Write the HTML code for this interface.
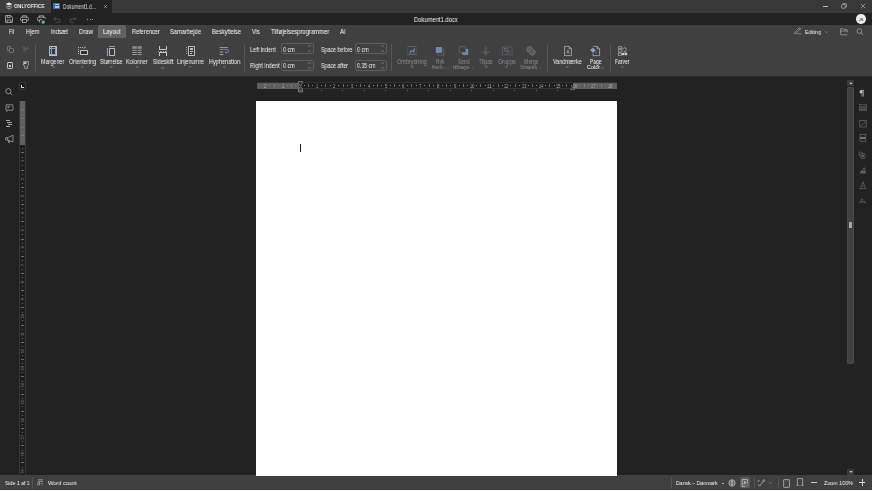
<!DOCTYPE html><html><head><meta charset="utf-8"><style>
html,body{margin:0;padding:0;width:872px;height:491px;overflow:hidden;background:#222;}
body{position:relative;font-family:"Liberation Sans", sans-serif;}
.t{position:absolute;white-space:nowrap;will-change:transform;}
.r{position:absolute;display:block;overflow:visible;}
</style></head><body>
<div class="r" style="left:0px;top:0px;width:872px;height:12.5px;background:#383838;"></div>
<div class="r" style="left:0px;top:0px;width:51px;height:12.5px;background:#3e3e3e;"></div>
<div class="r" style="left:51px;top:0px;width:61px;height:12.5px;background:#222;"></div>
<div class="r" style="left:0px;top:12.5px;width:872px;height:12.5px;background:#222;"></div>
<div class="r" style="left:0px;top:25px;width:872px;height:51px;background:#404040;"></div>
<div class="r" style="left:0px;top:76px;width:872px;height:399px;background:#222;"></div>
<div class="r" style="left:0px;top:76px;width:872px;height:1px;background:#2b2b2b;"></div>
<div class="r" style="left:0px;top:475.3px;width:872px;height:14.3px;background:#404040;"></div>
<div class="r" style="left:0px;top:489.5px;width:872px;height:1.5px;background:#f2f2f2;"></div>
<svg class="r" style="left:5.10px;top:2.30px;" width="8" height="8" viewBox="0 0 80 80" fill="none" stroke="#d0d0d0" stroke-width="10"><path d="M40 4 L74 20 L40 36 L6 20 Z" fill="#ececec" stroke="none"/>
<path d="M14 34 L6 38 L40 54 L74 38 L66 34 L40 46 Z" fill="#c4c4c4" stroke="none"/>
<path d="M14 52 L6 56 L40 74 L74 56 L66 52 L40 64 Z" fill="#a8a8a8" stroke="none"/></svg>
<div class="t" style="left:14.00px;top:3.00px;font-size:5.600px;line-height:6.26px;color:#e6e6e6;font-weight:bold;transform:scaleX(0.8630);transform-origin:0 0;">ONLYOFFICE</div>
<div class="r" style="left:53.4px;top:2.7px;width:6.8px;height:6.8px;background:#3e6aa8;border-radius:0.5px;"></div>
<div class="r" style="left:55.0px;top:4.3px;width:3.6px;height:0.6px;background:#b4c6e2;"></div>
<div class="r" style="left:55.0px;top:5.8px;width:3.6px;height:0.6px;background:#b4c6e2;"></div>
<div class="r" style="left:55.0px;top:7.3px;width:3.6px;height:0.6px;background:#b4c6e2;"></div>
<div class="t" style="left:63.00px;top:3.00px;font-size:6.500px;line-height:7.26px;color:#d8d8d8;transform:scaleX(0.7487);transform-origin:0 0;">Dokument1.d...</div>
<svg class="r" style="left:103.30px;top:3.70px;" width="5" height="5" viewBox="0 0 50 50" fill="none" stroke="#cfcfcf" stroke-width="10"><path d="M8 8 L42 42 M42 8 L8 42" stroke-width="5"/></svg>
<div class="r" style="left:823.2px;top:6.0px;width:5.2px;height:0.8px;background:#b8b8b8;"></div>
<svg class="r" style="left:841.20px;top:2.60px;" width="6" height="6" viewBox="0 0 60 60" fill="none" stroke="#cfcfcf" stroke-width="10"><rect x="6" y="16" width="36" height="36" rx="5" stroke-width="6"/><path d="M16 10 Q16 6 22 6 H48 Q54 6 54 12 V38 Q54 44 48 44" stroke-width="6"/></svg>
<svg class="r" style="left:859.60px;top:2.60px;" width="6" height="6" viewBox="0 0 60 60" fill="none" stroke="#d0d0d0" stroke-width="10"><path d="M8 8 L52 52 M52 8 L8 52" stroke-width="5.5"/></svg>
<svg class="r" style="left:4.50px;top:15.45px;" width="8" height="8" viewBox="0 0 80 80" fill="none" stroke="#d2d2d2" stroke-width="10"><path d="M6 6 H58 L74 22 V74 H6 Z" stroke-width="7"/><path d="M24 6 V26 H52 V6" stroke-width="6.5"/><path d="M22 74 V50 H58 V74" stroke-width="6.5"/></svg>
<svg class="r" style="left:20.20px;top:15.45px;" width="9" height="8" viewBox="0 0 90 80" fill="none" stroke="#d2d2d2" stroke-width="10"><path d="M24 22 V8 H66 V22" stroke-width="6.5"/><path d="M22 56 H14 Q6 56 6 48 V34 Q6 22 18 22 H72 Q84 22 84 34 V48 Q84 56 76 56 H68" stroke-width="6.5"/><rect x="26" y="46" width="38" height="28" stroke-width="6.5"/></svg>
<svg class="r" style="left:36.50px;top:15.45px;" width="9" height="8" viewBox="0 0 90 80" fill="none" stroke="#d2d2d2" stroke-width="10"><path d="M24 22 V8 H66 V22" stroke-width="6.5"/><path d="M22 56 H14 Q6 56 6 48 V34 Q6 22 18 22 H72 Q84 22 84 34 V40" stroke-width="6.5"/><path d="M26 74 V46 H50" stroke-width="6.5"/></svg>
<svg class="r" style="left:41.10px;top:19.60px;" width="4.4" height="4.4" viewBox="0 0 44.0 44.0" fill="none" stroke="#d0d0d0" stroke-width="10"><path d="M22 2 L38 10 L38 26 Q38 38 22 42 Q6 38 6 26 L6 10 Z" fill="#4fa36a" stroke="none"/><path d="M12 22 L19 29 L32 15" stroke="#dff5e6" stroke-width="4"/></svg>
<svg class="r" style="left:53.30px;top:15.50px;" width="8" height="8" viewBox="0 0 80 80" fill="none" stroke="#6a6a6a" stroke-width="10"><path d="M14 30 H52 Q70 30 70 48 Q70 66 52 66 H30 M28 14 L12 30 L28 46" stroke-width="6"/></svg>
<svg class="r" style="left:69.40px;top:15.50px;" width="8" height="8" viewBox="0 0 80 80" fill="none" stroke="#6a6a6a" stroke-width="10"><path d="M66 30 H28 Q10 30 10 48 Q10 66 28 66 H50 M52 14 L68 30 L52 46" stroke-width="6"/></svg>
<div class="r" style="left:87.3px;top:19.0px;width:1.0px;height:1.0px;background:#9c9c9c;"></div>
<div class="r" style="left:89.5px;top:19.0px;width:1.0px;height:1.0px;background:#9c9c9c;"></div>
<div class="r" style="left:91.7px;top:19.0px;width:1.0px;height:1.0px;background:#9c9c9c;"></div>
<div class="t" style="left:414.00px;top:16.00px;font-size:6.500px;line-height:7.26px;color:#f0f0f0;transform:scaleX(0.8980);transform-origin:0 0;">Dokument1.docx</div>
<div class="r" style="left:856.4px;top:14.4px;width:9.4px;height:9.4px;border-radius:50%;background:#ececec;"></div>
<div class="t" style="left:858.93px;top:19.00px;font-size:3.400px;line-height:3.80px;color:#6a6a6a;font-weight:bold;">JB</div>
<div class="r" style="left:98px;top:25.4px;width:28px;height:12.5px;background:#616161;border-radius:2px 2px 0 0;"></div>
<div class="t" style="left:8.70px;top:28.00px;font-size:6.500px;line-height:7.26px;color:#fafafa;transform:scaleX(0.6853);transform-origin:0 0;">Fil</div>
<div class="t" style="left:25.80px;top:28.00px;font-size:6.500px;line-height:7.26px;color:#fafafa;transform:scaleX(0.8835);transform-origin:0 0;">Hjem</div>
<div class="t" style="left:50.60px;top:28.00px;font-size:6.500px;line-height:7.26px;color:#fafafa;transform:scaleX(0.8606);transform-origin:0 0;">Indsæt</div>
<div class="t" style="left:79.00px;top:28.00px;font-size:6.500px;line-height:7.26px;color:#fafafa;transform:scaleX(0.9164);transform-origin:0 0;">Draw</div>
<div class="t" style="left:103.00px;top:28.00px;font-size:6.500px;line-height:7.26px;color:#fafafa;transform:scaleX(0.9019);transform-origin:0 0;">Layout</div>
<div class="t" style="left:131.70px;top:28.00px;font-size:6.500px;line-height:7.26px;color:#fafafa;transform:scaleX(0.8678);transform-origin:0 0;">Referencer</div>
<div class="t" style="left:170.30px;top:28.00px;font-size:6.500px;line-height:7.26px;color:#fafafa;transform:scaleX(0.8845);transform-origin:0 0;">Samarbejde</div>
<div class="t" style="left:212.10px;top:28.00px;font-size:6.500px;line-height:7.26px;color:#fafafa;transform:scaleX(0.8726);transform-origin:0 0;">Beskyttelse</div>
<div class="t" style="left:251.70px;top:28.00px;font-size:6.500px;line-height:7.26px;color:#fafafa;transform:scaleX(0.8528);transform-origin:0 0;">Vis</div>
<div class="t" style="left:270.60px;top:28.00px;font-size:6.500px;line-height:7.26px;color:#fafafa;transform:scaleX(0.9021);transform-origin:0 0;">Tilføjelsesprogrammer</div>
<div class="t" style="left:339.50px;top:28.00px;font-size:6.500px;line-height:7.26px;color:#fafafa;transform:scaleX(0.8955);transform-origin:0 0;">AI</div>
<svg class="r" style="left:793.60px;top:27.40px;" width="8" height="8" viewBox="0 0 80 80" fill="none" stroke="#c8c8c8" stroke-width="10"><path d="M6 68 L10 52 L50 10 Q56 4 62 10 Q68 16 62 22 L22 62 Z M44 16 L56 28 M30 68 H72" stroke-width="5"/></svg>
<div class="t" style="left:804.70px;top:29.00px;font-size:6.200px;line-height:6.93px;color:#ececec;transform:scaleX(0.8440);transform-origin:0 0;">Editing</div>
<svg class="r" style="left:825.10px;top:30.90px;" width="3" height="2" viewBox="0 0 30 20" fill="none" stroke="#b8b8b8" stroke-width="10"><path d="M3 4 L15 16 L27 4" stroke-width="5"/></svg>
<svg class="r" style="left:839.70px;top:27.60px;" width="8" height="8" viewBox="0 0 80 80" fill="none" stroke="#c8c8c8" stroke-width="10"><path d="M54 68 H12 Q6 68 6 62 V10 Q6 6 10 6 H26 L34 14 H66 Q72 14 72 20 V44 M6 30 H72" stroke-width="5.5"/><path d="M48 68 H72 M64 60 L72 68 L64 76" stroke="#79a3de" stroke-width="5"/></svg>
<svg class="r" style="left:856.20px;top:27.60px;" width="8" height="8" viewBox="0 0 80 80" fill="none" stroke="#c8c8c8" stroke-width="10"><circle cx="34" cy="30" r="24" stroke-width="5.5"/><path d="M52 48 L70 68" stroke-width="5.5"/></svg>
<div class="r" style="left:6.6px;top:46.3px;width:4.6px;height:4.4px;background:transparent;box-sizing:border-box;border:0.8px solid #707070;border-radius:1px;"></div>
<div class="r" style="left:9.0px;top:48.0px;width:4.6px;height:4.8px;background:#404040;box-sizing:border-box;border:0.8px solid #707070;border-radius:1px;"></div>
<svg class="r" style="left:22.00px;top:45.45px;" width="8" height="8" viewBox="0 0 80 80" fill="none" stroke="#6e6e6e" stroke-width="10"><circle cx="16" cy="26" r="9" stroke-width="5"/><circle cx="24" cy="56" r="9" stroke-width="5"/><path d="M24 30 L40 40 L64 10 M30 50 L40 40 L72 34" stroke-width="5"/></svg>
<div class="r" style="left:7.0px;top:62.3px;width:6.2px;height:7.0px;background:transparent;box-sizing:border-box;border:1px solid #c4c4c4;border-radius:1.2px;"></div>
<div class="r" style="left:8.4px;top:61.8px;width:3.4px;height:1.0px;background:#c4c4c4;"></div>
<div class="r" style="left:9.2px;top:65.0px;width:1.8px;height:1.6px;background:#c4c4c4;"></div>
<svg class="r" style="left:21.65px;top:61.40px;" width="8" height="8" viewBox="0 0 80 80" fill="none" stroke="#c9c9c9" stroke-width="10"><path d="M14 6 H64 V40 L54 48 V74 H28 V48 L14 40 Z" stroke-width="6.5"/><path d="M20 12 H46 V26 L34 30 H20 Z" fill="#c9c9c9" stroke="none"/></svg>
<div class="r" style="left:35.0px;top:43.8px;width:0.6px;height:27px;background:#555555;"></div>
<div class="r" style="left:48.9px;top:46.0px;width:8.2px;height:10.0px;background:#383838;box-sizing:border-box;border:1px solid #bdbdbd;border-radius:0.6px;"></div>
<div class="r" style="left:50.7px;top:47.0px;width:0.8px;height:8.0px;background:#84a5d8;"></div>
<div class="r" style="left:54.6px;top:47.0px;width:0.8px;height:8.0px;background:#84a5d8;"></div>
<div class="r" style="left:50.0px;top:47.5px;width:6.0px;height:0.8px;background:#84a5d8;"></div>
<div class="r" style="left:50.0px;top:53.6px;width:6.0px;height:0.8px;background:#84a5d8;"></div>
<div class="t" style="left:41.20px;top:58.00px;font-size:6.500px;line-height:7.26px;color:#f0f0f0;transform:scaleX(0.8341);transform-origin:0 0;">Margener</div>
<svg class="r" style="left:51.50px;top:66.30px;" width="2.6" height="1.8" viewBox="0 0 26.0 18.0" fill="none" stroke="#b4b4b4" stroke-width="10"><path d="M3 4 L13 14 L23 4" stroke-width="6.5"/></svg>
<div class="r" style="left:77.9px;top:47.1px;width:1.0px;height:1.0px;background:#b8b8b8;"></div>
<div class="r" style="left:77.9px;top:48.9px;width:1.0px;height:1.0px;background:#b8b8b8;"></div>
<div class="r" style="left:77.9px;top:50.9px;width:1.0px;height:1.0px;background:#b8b8b8;"></div>
<div class="r" style="left:77.9px;top:53.0px;width:1.0px;height:1.0px;background:#b8b8b8;"></div>
<div class="r" style="left:79.9px;top:47.1px;width:1.0px;height:1.0px;background:#b8b8b8;"></div>
<div class="r" style="left:81.9px;top:47.1px;width:1.0px;height:1.0px;background:#b8b8b8;"></div>
<div class="r" style="left:80.0px;top:49.9px;width:7.6px;height:5.0px;background:#343434;box-sizing:border-box;border:1px solid #c4c4c4;border-radius:0.5px;"></div>
<svg class="r" style="left:83.40px;top:46.00px;" width="4" height="4" viewBox="0 0 40 40" fill="none" stroke="#d0d0d0" stroke-width="10"><path d="M6 30 Q6 8 24 10" stroke="#84a5d8" stroke-width="7"/><path d="M18 2 L32 12 L18 22 Z" fill="#84a5d8" stroke="none"/></svg>
<div class="t" style="left:68.90px;top:58.00px;font-size:6.500px;line-height:7.26px;color:#f0f0f0;transform:scaleX(0.8398);transform-origin:0 0;">Orientering</div>
<svg class="r" style="left:81.10px;top:66.30px;" width="2.6" height="1.8" viewBox="0 0 26.0 18.0" fill="none" stroke="#b4b4b4" stroke-width="10"><path d="M3 4 L13 14 L23 4" stroke-width="6.5"/></svg>
<div class="r" style="left:109.0px;top:48.0px;width:6.0px;height:8.0px;background:#383838;box-sizing:border-box;border:1px solid #bdbdbd;border-radius:0.6px;"></div>
<div class="r" style="left:108.9px;top:46.2px;width:6.1px;height:0.9px;background:#84a5d8;"></div>
<div class="r" style="left:107.0px;top:48.0px;width:0.9px;height:8.0px;background:#84a5d8;"></div>
<div class="t" style="left:99.95px;top:58.00px;font-size:6.500px;line-height:7.26px;color:#f0f0f0;transform:scaleX(0.8534);transform-origin:0 0;">Størrelse</div>
<svg class="r" style="left:109.90px;top:66.30px;" width="2.6" height="1.8" viewBox="0 0 26.0 18.0" fill="none" stroke="#b4b4b4" stroke-width="10"><path d="M3 4 L13 14 L23 4" stroke-width="6.5"/></svg>
<svg class="r" style="left:132.20px;top:45.90px;" width="10" height="10" viewBox="0 0 100 100" fill="none" stroke="#c4c4c4" stroke-width="10"><rect x="3" y="2" width="45" height="26" fill="#8a8a8a" stroke="none"/><rect x="56" y="2" width="41" height="26" fill="#8a8a8a" stroke="none"/><path d="M3 43 H48 M56 43 H97 M3 65 H48 M56 65 H97 M3 85 H48 M56 85 H97" stroke-width="7"/></svg>
<div class="t" style="left:126.40px;top:58.00px;font-size:6.500px;line-height:7.26px;color:#f0f0f0;transform:scaleX(0.8302);transform-origin:0 0;">Kolonner</div>
<svg class="r" style="left:135.90px;top:66.30px;" width="2.6" height="1.8" viewBox="0 0 26.0 18.0" fill="none" stroke="#b4b4b4" stroke-width="10"><path d="M3 4 L13 14 L23 4" stroke-width="6.5"/></svg>
<div class="r" style="left:159.0px;top:46.0px;width:0.9px;height:4.0px;background:#c4c4c4;"></div>
<div class="r" style="left:166.0px;top:46.0px;width:0.9px;height:4.0px;background:#c4c4c4;"></div>
<div class="r" style="left:159.0px;top:49.2px;width:7.9px;height:0.9px;background:#c4c4c4;"></div>
<div class="r" style="left:159.0px;top:52.2px;width:7.9px;height:0.9px;background:#c4c4c4;"></div>
<div class="r" style="left:159.0px;top:52.2px;width:0.9px;height:3.8px;background:#c4c4c4;"></div>
<div class="r" style="left:166.0px;top:52.2px;width:0.9px;height:3.8px;background:#c4c4c4;"></div>
<div class="r" style="left:157.9px;top:50.9px;width:1.0px;height:0.8px;background:#84a5d8;"></div>
<div class="r" style="left:159.6px;top:50.9px;width:1.0px;height:0.8px;background:#84a5d8;"></div>
<div class="r" style="left:161.3px;top:50.9px;width:1.0px;height:0.8px;background:#84a5d8;"></div>
<div class="r" style="left:163.0px;top:50.9px;width:1.0px;height:0.8px;background:#84a5d8;"></div>
<div class="r" style="left:164.7px;top:50.9px;width:1.0px;height:0.8px;background:#84a5d8;"></div>
<div class="r" style="left:166.4px;top:50.9px;width:1.0px;height:0.8px;background:#84a5d8;"></div>
<div class="t" style="left:152.50px;top:58.00px;font-size:6.500px;line-height:7.26px;color:#f0f0f0;transform:scaleX(0.8305);transform-origin:0 0;">Sideskift</div>
<svg class="r" style="left:160.80px;top:66.50px;" width="3.2" height="2.2" viewBox="0 0 32.0 22.0" fill="none" stroke="#c0c0c0" stroke-width="10"><path d="M3 4 L16 17 L29 4" stroke-width="6"/></svg>
<div class="r" style="left:188.2px;top:46.2px;width:6.6px;height:9.6px;background:#383838;box-sizing:border-box;border:1px solid #bdbdbd;border-radius:0.8px;"></div>
<div class="r" style="left:189.9px;top:47.6px;width:3.2px;height:0.8px;background:#bdbdbd;"></div>
<div class="r" style="left:189.9px;top:48.9px;width:3.2px;height:1.6px;background:#bdbdbd;"></div>
<div class="r" style="left:189.9px;top:51.3px;width:3.2px;height:0.8px;background:#bdbdbd;"></div>
<div class="r" style="left:189.9px;top:52.9px;width:2.0px;height:0.8px;background:#bdbdbd;"></div>
<div class="r" style="left:185.8px;top:46.6px;width:0.9px;height:1.2px;background:#84a5d8;"></div>
<div class="r" style="left:185.8px;top:48.7px;width:0.9px;height:1.2px;background:#84a5d8;"></div>
<div class="r" style="left:185.8px;top:50.9px;width:0.9px;height:1.2px;background:#84a5d8;"></div>
<div class="r" style="left:185.8px;top:53.2px;width:0.9px;height:1.2px;background:#84a5d8;"></div>
<div class="t" style="left:177.15px;top:58.00px;font-size:6.500px;line-height:7.26px;color:#f0f0f0;transform:scaleX(0.8366);transform-origin:0 0;">Linjenumre</div>
<svg class="r" style="left:189.30px;top:66.30px;" width="2.6" height="1.8" viewBox="0 0 26.0 18.0" fill="none" stroke="#b4b4b4" stroke-width="10"><path d="M3 4 L13 14 L23 4" stroke-width="6.5"/></svg>
<svg class="r" style="left:219.10px;top:45.90px;" width="10" height="10" viewBox="0 0 100 100" fill="none" stroke="#c9c9c9" stroke-width="10"><path d="M7 16 H89 M7 61 H40 M7 86 H44" stroke-width="7"/><path d="M7 36 H80 Q98 36 98 50 Q98 64 82 64 H72" stroke="#84a5d8" stroke-width="6"/><path d="M74 52 L60 64 L74 76 Z" fill="#84a5d8" stroke="none"/></svg>
<div class="t" style="left:208.55px;top:58.00px;font-size:6.500px;line-height:7.26px;color:#f0f0f0;transform:scaleX(0.8521);transform-origin:0 0;">Hyphenation</div>
<svg class="r" style="left:222.80px;top:66.30px;" width="2.6" height="1.8" viewBox="0 0 26.0 18.0" fill="none" stroke="#b4b4b4" stroke-width="10"><path d="M3 4 L13 14 L23 4" stroke-width="6.5"/></svg>
<div class="r" style="left:244.3px;top:43.8px;width:0.6px;height:27px;background:#555555;"></div>
<div class="t" style="left:249.60px;top:46.00px;font-size:6.500px;line-height:7.26px;color:#f0f0f0;transform:scaleX(0.8499);transform-origin:0 0;">Left indent</div>
<div class="t" style="left:249.60px;top:62.00px;font-size:6.500px;line-height:7.26px;color:#f0f0f0;transform:scaleX(0.8504);transform-origin:0 0;">Right indent</div>
<div class="r" style="left:281.2px;top:43.4px;width:32.4px;height:10.8px;box-sizing:border-box;border:0.7px solid #5c5c5c;border-radius:2px;background:#404040;"></div>
<div class="t" style="left:283.30px;top:46.00px;font-size:6.500px;line-height:7.26px;color:#f0f0f0;transform:scaleX(0.8236);transform-origin:0 0;">0 cm</div>
<svg class="r" style="left:307.90px;top:45.40px;" width="3" height="2" viewBox="0 0 30 20" fill="none" stroke="#bbbbbb" stroke-width="10"><path d="M4 16 L15 4 L26 16" stroke-width="5"/></svg>
<svg class="r" style="left:307.90px;top:50.40px;" width="3" height="2" viewBox="0 0 30 20" fill="none" stroke="#bbbbbb" stroke-width="10"><path d="M4 4 L15 16 L26 4" stroke-width="5"/></svg>
<div class="r" style="left:281.2px;top:60.2px;width:32.4px;height:10.8px;box-sizing:border-box;border:0.7px solid #5c5c5c;border-radius:2px;background:#404040;"></div>
<div class="t" style="left:283.30px;top:62.00px;font-size:6.500px;line-height:7.26px;color:#f0f0f0;transform:scaleX(0.8236);transform-origin:0 0;">0 cm</div>
<svg class="r" style="left:307.90px;top:62.20px;" width="3" height="2" viewBox="0 0 30 20" fill="none" stroke="#bbbbbb" stroke-width="10"><path d="M4 16 L15 4 L26 16" stroke-width="5"/></svg>
<svg class="r" style="left:307.90px;top:67.20px;" width="3" height="2" viewBox="0 0 30 20" fill="none" stroke="#bbbbbb" stroke-width="10"><path d="M4 4 L15 16 L26 4" stroke-width="5"/></svg>
<div class="t" style="left:320.80px;top:46.00px;font-size:6.500px;line-height:7.26px;color:#f0f0f0;transform:scaleX(0.8121);transform-origin:0 0;">Space before</div>
<div class="t" style="left:320.80px;top:62.00px;font-size:6.500px;line-height:7.26px;color:#f0f0f0;transform:scaleX(0.8123);transform-origin:0 0;">Space after</div>
<div class="r" style="left:355.2px;top:43.4px;width:31.5px;height:10.8px;box-sizing:border-box;border:0.7px solid #5c5c5c;border-radius:2px;background:#404040;"></div>
<div class="t" style="left:357.30px;top:46.00px;font-size:6.500px;line-height:7.26px;color:#f0f0f0;transform:scaleX(0.8236);transform-origin:0 0;">0 cm</div>
<svg class="r" style="left:381.00px;top:45.40px;" width="3" height="2" viewBox="0 0 30 20" fill="none" stroke="#bbbbbb" stroke-width="10"><path d="M4 16 L15 4 L26 16" stroke-width="5"/></svg>
<svg class="r" style="left:381.00px;top:50.40px;" width="3" height="2" viewBox="0 0 30 20" fill="none" stroke="#bbbbbb" stroke-width="10"><path d="M4 4 L15 16 L26 4" stroke-width="5"/></svg>
<div class="r" style="left:355.2px;top:60.2px;width:31.5px;height:10.8px;box-sizing:border-box;border:0.7px solid #5c5c5c;border-radius:2px;background:#404040;"></div>
<div class="t" style="left:357.30px;top:62.00px;font-size:6.500px;line-height:7.26px;color:#f0f0f0;transform:scaleX(0.7915);transform-origin:0 0;">0.35 cm</div>
<svg class="r" style="left:381.00px;top:62.20px;" width="3" height="2" viewBox="0 0 30 20" fill="none" stroke="#bbbbbb" stroke-width="10"><path d="M4 16 L15 4 L26 16" stroke-width="5"/></svg>
<svg class="r" style="left:381.00px;top:67.20px;" width="3" height="2" viewBox="0 0 30 20" fill="none" stroke="#bbbbbb" stroke-width="10"><path d="M4 4 L15 16 L26 4" stroke-width="5"/></svg>
<div class="r" style="left:391.3px;top:43.8px;width:0.6px;height:27px;background:#555555;"></div>
<svg class="r" style="left:406.90px;top:45.90px;" width="10" height="10" viewBox="0 0 100 100" fill="none" stroke="#767676" stroke-width="10"><path d="M3 5 H97 M3 85 H97" stroke-width="6"/><path d="M6 22 V28 M6 42 V48 M6 64 V70 M94 22 V28 M94 42 V48 M94 64 V70" stroke-width="6"/><path d="M26 76 L30 48 Q34 40 44 44 L58 46 L70 26 L78 24 L84 36 L76 40 L74 76 L66 76 L64 58 L42 58 L38 76 Z" fill="#6c83a8" stroke="none"/></svg>
<div class="t" style="left:397.00px;top:58.00px;font-size:6.500px;line-height:7.26px;color:#8c8c8c;transform:scaleX(0.8418);transform-origin:0 0;">Ombrydning</div>
<svg class="r" style="left:410.60px;top:66.30px;" width="2.6" height="1.8" viewBox="0 0 26.0 18.0" fill="none" stroke="#b4b4b4" stroke-width="10"><path d="M3 4 L13 14 L23 4" stroke-width="6.5"/></svg>
<svg class="r" style="left:435.20px;top:45.90px;" width="10" height="10" viewBox="0 0 100 100" fill="none" stroke="#767676" stroke-width="10"><path d="M69 31 H88 V91 H28 V69" stroke-width="6"/><rect x="8" y="11" width="61" height="58" fill="#7389b0" stroke="none"/></svg>
<div class="t" style="left:436.10px;top:58.00px;font-size:6.500px;line-height:7.26px;color:#8c8c8c;transform:scaleX(0.7504);transform-origin:0 0;">Ryk</div>
<div class="t" style="left:432.30px;top:64.00px;font-size:6.200px;line-height:6.93px;color:#909090;transform:scaleX(0.8872);transform-origin:0 0;">frem</div>
<svg class="r" style="left:444.10px;top:66.60px;" width="3" height="2" viewBox="0 0 30 20" fill="none" stroke="#777" stroke-width="10"><path d="M4 4 L15 16 L26 4" stroke-width="5"/></svg>
<svg class="r" style="left:458.00px;top:45.90px;" width="10" height="10" viewBox="0 0 100 100" fill="none" stroke="#767676" stroke-width="10"><rect x="42" y="30" width="60" height="59" fill="#7389b0" stroke="none"/><rect x="11" y="7" width="66" height="57" rx="8" fill="#404040" stroke-width="6"/></svg>
<div class="t" style="left:458.00px;top:58.00px;font-size:6.500px;line-height:7.26px;color:#8c8c8c;transform:scaleX(0.7642);transform-origin:0 0;">Send</div>
<div class="t" style="left:453.00px;top:64.00px;font-size:6.200px;line-height:6.93px;color:#909090;transform:scaleX(0.9087);transform-origin:0 0;">tilbage</div>
<svg class="r" style="left:470.60px;top:66.60px;" width="3" height="2" viewBox="0 0 30 20" fill="none" stroke="#777" stroke-width="10"><path d="M4 4 L15 16 L26 4" stroke-width="5"/></svg>
<svg class="r" style="left:481.20px;top:45.90px;" width="10" height="10" viewBox="0 0 100 100" fill="none" stroke="#767676" stroke-width="10"><path d="M48 16 L60 32 L48 46 L36 32 Z M8 60 H88 M48 46 V96 M30 74 H66" stroke-width="6"/><path d="M48 4 V14" stroke-width="5"/></svg>
<div class="t" style="left:479.40px;top:58.00px;font-size:6.500px;line-height:7.26px;color:#8c8c8c;transform:scaleX(0.7955);transform-origin:0 0;">Tilpas</div>
<svg class="r" style="left:484.90px;top:66.30px;" width="2.6" height="1.8" viewBox="0 0 26.0 18.0" fill="none" stroke="#b4b4b4" stroke-width="10"><path d="M3 4 L13 14 L23 4" stroke-width="6.5"/></svg>
<svg class="r" style="left:501.50px;top:45.90px;" width="10" height="10" viewBox="0 0 100 100" fill="none" stroke="#767676" stroke-width="10"><rect x="6" y="10" width="94" height="79" stroke="#56698a" stroke-width="6"/><rect x="26" y="24" width="26" height="26" stroke-width="6"/><circle cx="64" cy="60" r="14" stroke-width="6"/></svg>
<div class="t" style="left:497.50px;top:58.00px;font-size:6.500px;line-height:7.26px;color:#8c8c8c;transform:scaleX(0.8303);transform-origin:0 0;">Gruppe</div>
<svg class="r" style="left:505.20px;top:66.30px;" width="2.6" height="1.8" viewBox="0 0 26.0 18.0" fill="none" stroke="#b4b4b4" stroke-width="10"><path d="M3 4 L13 14 L23 4" stroke-width="6.5"/></svg>
<svg class="r" style="left:526.40px;top:45.90px;" width="10" height="10" viewBox="0 0 100 100" fill="none" stroke="#747474" stroke-width="10"><circle cx="36" cy="34" r="28" fill="#5a5a5a" stroke-width="7"/><circle cx="64" cy="64" r="28" fill="#5a5a5a" stroke-width="7"/><path d="M40 62 L62 38" stroke="#404040" stroke-width="10"/></svg>
<div class="t" style="left:524.00px;top:58.00px;font-size:6.500px;line-height:7.26px;color:#8c8c8c;transform:scaleX(0.7925);transform-origin:0 0;">Merge</div>
<div class="t" style="left:520.00px;top:64.00px;font-size:6.200px;line-height:6.93px;color:#909090;transform:scaleX(0.8085);transform-origin:0 0;">Shapes</div>
<svg class="r" style="left:538.80px;top:66.60px;" width="3" height="2" viewBox="0 0 30 20" fill="none" stroke="#777" stroke-width="10"><path d="M4 4 L15 16 L26 4" stroke-width="5"/></svg>
<div class="r" style="left:547.3px;top:43.8px;width:0.6px;height:27px;background:#555555;"></div>
<svg class="r" style="left:562.50px;top:45.90px;" width="10" height="10" viewBox="0 0 100 100" fill="none" stroke="#c9c9c9" stroke-width="10"><path d="M16 4 H62 L84 26 V96 H16 Z M62 4 V26 H84" stroke-width="6.5"/><path d="M38 76 L50 38 L62 76 M42 64 H58" stroke="#84a5d8" stroke-width="7"/></svg>
<div class="t" style="left:553.10px;top:58.00px;font-size:6.500px;line-height:7.26px;color:#f0f0f0;transform:scaleX(0.8247);transform-origin:0 0;">Vandmærke</div>
<svg class="r" style="left:566.20px;top:66.30px;" width="2.6" height="1.8" viewBox="0 0 26.0 18.0" fill="none" stroke="#b4b4b4" stroke-width="10"><path d="M3 4 L13 14 L23 4" stroke-width="6.5"/></svg>
<svg class="r" style="left:590.30px;top:45.90px;" width="10" height="10" viewBox="0 0 100 100" fill="none" stroke="#c9c9c9" stroke-width="10"><path d="M34 4 H72 L96 28 V96 H30 V74 M72 4 V28 H96" stroke-width="6.5"/><path d="M6 40 L28 20 L52 42 L30 64 Z" fill="#84a5d8" stroke="#d0d0d0" stroke-width="5"/><circle cx="60" cy="66" r="7" fill="#84a5d8" stroke="none"/></svg>
<div class="t" style="left:590.20px;top:58.00px;font-size:6.500px;line-height:7.26px;color:#f0f0f0;transform:scaleX(0.7642);transform-origin:0 0;">Page</div>
<div class="t" style="left:586.60px;top:64.00px;font-size:6.200px;line-height:6.93px;color:#ffffff;transform:scaleX(0.8707);transform-origin:0 0;">Color</div>
<svg class="r" style="left:600.70px;top:66.60px;" width="3" height="2" viewBox="0 0 30 20" fill="none" stroke="#bbbbbb" stroke-width="10"><path d="M4 4 L15 16 L26 4" stroke-width="5"/></svg>
<div class="r" style="left:610.2px;top:43.8px;width:0.6px;height:27px;background:#555555;"></div>
<svg class="r" style="left:617.60px;top:45.90px;" width="10" height="10" viewBox="0 0 100 100" fill="none" stroke="#c9c9c9" stroke-width="10"><rect x="6" y="6" width="34" height="24" rx="5" stroke-width="6"/><rect x="6" y="30" width="34" height="30" rx="5" stroke-width="6"/><path d="M54 30 Q54 18 68 18 Q84 18 84 32 Q84 40 74 48 L56 62 H88" stroke-width="6"/><rect x="6" y="70" width="28" height="22" stroke-width="6"/><rect x="38" y="70" width="24" height="22" fill="#c9c9c9" stroke="none"/><rect x="66" y="70" width="26" height="22" fill="#c9c9c9" stroke="none"/></svg>
<div class="t" style="left:615.40px;top:58.00px;font-size:6.500px;line-height:7.26px;color:#f0f0f0;transform:scaleX(0.7669);transform-origin:0 0;">Farver</div>
<svg class="r" style="left:621.30px;top:66.30px;" width="2.6" height="1.8" viewBox="0 0 26.0 18.0" fill="none" stroke="#b4b4b4" stroke-width="10"><path d="M3 4 L13 14 L23 4" stroke-width="6.5"/></svg>
<div class="r" style="left:256.1px;top:100.6px;width:361.3px;height:375.0px;background:#ffffff;"></div>
<div class="r" style="left:300px;top:144.3px;width:1px;height:7.6px;background:#1a1a1a;"></div>
<div class="r" style="left:256.8px;top:82.0px;width:359.8px;height:7.0px;background:#1e1e1e;box-sizing:border-box;border-top:1px solid #323232;border-bottom:1px solid #323232;"></div>
<div class="r" style="left:256.8px;top:83px;width:42.6px;height:5.9px;background:#5e5e5e;"></div>
<div class="r" style="left:572.9px;top:83px;width:43.7px;height:5.9px;background:#5e5e5e;"></div>
<div class="r" style="left:260.8px;top:85.2px;width:1.0px;height:1.0px;background:#808080;"></div>
<div class="t" style="left:264.41px;top:83.00px;font-size:5.600px;line-height:6.26px;color:#b0b0b0;transform:scaleX(0.7386);transform-origin:0 0;">2</div>
<div class="r" style="left:269.4px;top:85.2px;width:1.0px;height:1.0px;background:#808080;"></div>
<div class="r" style="left:273.7px;top:84.4px;width:0.9px;height:2.6px;background:#7e7e7e;"></div>
<div class="r" style="left:278.0px;top:85.2px;width:1.0px;height:1.0px;background:#808080;"></div>
<div class="t" style="left:281.63px;top:83.00px;font-size:5.600px;line-height:6.26px;color:#b0b0b0;transform:scaleX(0.7386);transform-origin:0 0;">1</div>
<div class="r" style="left:286.6px;top:85.2px;width:1.0px;height:1.0px;background:#808080;"></div>
<div class="r" style="left:290.9px;top:84.4px;width:0.9px;height:2.6px;background:#7e7e7e;"></div>
<div class="r" style="left:295.2px;top:85.2px;width:1.0px;height:1.0px;background:#808080;"></div>
<div class="r" style="left:303.8px;top:85.2px;width:1.0px;height:1.0px;background:#8a8a8a;"></div>
<div class="r" style="left:308.1px;top:84.4px;width:0.9px;height:2.6px;background:#6a6a6a;"></div>
<div class="r" style="left:312.4px;top:85.2px;width:1.0px;height:1.0px;background:#8a8a8a;"></div>
<div class="t" style="left:316.07px;top:83.00px;font-size:5.600px;line-height:6.26px;color:#b0b0b0;transform:scaleX(0.7386);transform-origin:0 0;">1</div>
<div class="r" style="left:321.0px;top:85.2px;width:1.0px;height:1.0px;background:#8a8a8a;"></div>
<div class="r" style="left:325.3px;top:84.4px;width:0.9px;height:2.6px;background:#6a6a6a;"></div>
<div class="r" style="left:329.6px;top:85.2px;width:1.0px;height:1.0px;background:#8a8a8a;"></div>
<div class="t" style="left:333.29px;top:83.00px;font-size:5.600px;line-height:6.26px;color:#b0b0b0;transform:scaleX(0.7386);transform-origin:0 0;">2</div>
<div class="r" style="left:338.2px;top:85.2px;width:1.0px;height:1.0px;background:#8a8a8a;"></div>
<div class="r" style="left:342.6px;top:84.4px;width:0.9px;height:2.6px;background:#6a6a6a;"></div>
<div class="r" style="left:346.9px;top:85.2px;width:1.0px;height:1.0px;background:#8a8a8a;"></div>
<div class="t" style="left:350.51px;top:83.00px;font-size:5.600px;line-height:6.26px;color:#b0b0b0;transform:scaleX(0.7386);transform-origin:0 0;">3</div>
<div class="r" style="left:355.5px;top:85.2px;width:1.0px;height:1.0px;background:#8a8a8a;"></div>
<div class="r" style="left:359.8px;top:84.4px;width:0.9px;height:2.6px;background:#6a6a6a;"></div>
<div class="r" style="left:364.1px;top:85.2px;width:1.0px;height:1.0px;background:#8a8a8a;"></div>
<div class="t" style="left:367.73px;top:83.00px;font-size:5.600px;line-height:6.26px;color:#b0b0b0;transform:scaleX(0.7386);transform-origin:0 0;">4</div>
<div class="r" style="left:372.7px;top:85.2px;width:1.0px;height:1.0px;background:#8a8a8a;"></div>
<div class="r" style="left:377.0px;top:84.4px;width:0.9px;height:2.6px;background:#6a6a6a;"></div>
<div class="r" style="left:381.3px;top:85.2px;width:1.0px;height:1.0px;background:#8a8a8a;"></div>
<div class="t" style="left:384.95px;top:83.00px;font-size:5.600px;line-height:6.26px;color:#b0b0b0;transform:scaleX(0.7386);transform-origin:0 0;">5</div>
<div class="r" style="left:389.9px;top:85.2px;width:1.0px;height:1.0px;background:#8a8a8a;"></div>
<div class="r" style="left:394.2px;top:84.4px;width:0.9px;height:2.6px;background:#6a6a6a;"></div>
<div class="r" style="left:398.5px;top:85.2px;width:1.0px;height:1.0px;background:#8a8a8a;"></div>
<div class="t" style="left:402.17px;top:83.00px;font-size:5.600px;line-height:6.26px;color:#b0b0b0;transform:scaleX(0.7386);transform-origin:0 0;">6</div>
<div class="r" style="left:407.1px;top:85.2px;width:1.0px;height:1.0px;background:#8a8a8a;"></div>
<div class="r" style="left:411.4px;top:84.4px;width:0.9px;height:2.6px;background:#6a6a6a;"></div>
<div class="r" style="left:415.7px;top:85.2px;width:1.0px;height:1.0px;background:#8a8a8a;"></div>
<div class="t" style="left:419.39px;top:83.00px;font-size:5.600px;line-height:6.26px;color:#b0b0b0;transform:scaleX(0.7386);transform-origin:0 0;">7</div>
<div class="r" style="left:424.3px;top:85.2px;width:1.0px;height:1.0px;background:#8a8a8a;"></div>
<div class="r" style="left:428.6px;top:84.4px;width:0.9px;height:2.6px;background:#6a6a6a;"></div>
<div class="r" style="left:433.0px;top:85.2px;width:1.0px;height:1.0px;background:#8a8a8a;"></div>
<div class="t" style="left:436.61px;top:83.00px;font-size:5.600px;line-height:6.26px;color:#b0b0b0;transform:scaleX(0.7386);transform-origin:0 0;">8</div>
<div class="r" style="left:441.6px;top:85.2px;width:1.0px;height:1.0px;background:#8a8a8a;"></div>
<div class="r" style="left:445.9px;top:84.4px;width:0.9px;height:2.6px;background:#6a6a6a;"></div>
<div class="r" style="left:450.2px;top:85.2px;width:1.0px;height:1.0px;background:#8a8a8a;"></div>
<div class="t" style="left:453.83px;top:83.00px;font-size:5.600px;line-height:6.26px;color:#b0b0b0;transform:scaleX(0.7386);transform-origin:0 0;">9</div>
<div class="r" style="left:458.8px;top:85.2px;width:1.0px;height:1.0px;background:#8a8a8a;"></div>
<div class="r" style="left:463.1px;top:84.4px;width:0.9px;height:2.6px;background:#6a6a6a;"></div>
<div class="r" style="left:467.4px;top:85.2px;width:1.0px;height:1.0px;background:#8a8a8a;"></div>
<div class="t" style="left:470.00px;top:83.00px;font-size:5.600px;line-height:6.26px;color:#b0b0b0;transform:scaleX(0.7065);transform-origin:0 0;">10</div>
<div class="r" style="left:476.0px;top:85.2px;width:1.0px;height:1.0px;background:#8a8a8a;"></div>
<div class="r" style="left:480.3px;top:84.4px;width:0.9px;height:2.6px;background:#6a6a6a;"></div>
<div class="r" style="left:484.6px;top:85.2px;width:1.0px;height:1.0px;background:#8a8a8a;"></div>
<div class="t" style="left:487.22px;top:83.00px;font-size:5.600px;line-height:6.26px;color:#b0b0b0;transform:scaleX(0.7570);transform-origin:0 0;">11</div>
<div class="r" style="left:493.2px;top:85.2px;width:1.0px;height:1.0px;background:#8a8a8a;"></div>
<div class="r" style="left:497.5px;top:84.4px;width:0.9px;height:2.6px;background:#6a6a6a;"></div>
<div class="r" style="left:501.8px;top:85.2px;width:1.0px;height:1.0px;background:#8a8a8a;"></div>
<div class="t" style="left:504.44px;top:83.00px;font-size:5.600px;line-height:6.26px;color:#b0b0b0;transform:scaleX(0.7065);transform-origin:0 0;">12</div>
<div class="r" style="left:510.4px;top:85.2px;width:1.0px;height:1.0px;background:#8a8a8a;"></div>
<div class="r" style="left:514.8px;top:84.4px;width:0.9px;height:2.6px;background:#6a6a6a;"></div>
<div class="r" style="left:519.1px;top:85.2px;width:1.0px;height:1.0px;background:#8a8a8a;"></div>
<div class="t" style="left:521.66px;top:83.00px;font-size:5.600px;line-height:6.26px;color:#b0b0b0;transform:scaleX(0.7065);transform-origin:0 0;">13</div>
<div class="r" style="left:527.7px;top:85.2px;width:1.0px;height:1.0px;background:#8a8a8a;"></div>
<div class="r" style="left:532.0px;top:84.4px;width:0.9px;height:2.6px;background:#6a6a6a;"></div>
<div class="r" style="left:536.3px;top:85.2px;width:1.0px;height:1.0px;background:#8a8a8a;"></div>
<div class="t" style="left:538.88px;top:83.00px;font-size:5.600px;line-height:6.26px;color:#b0b0b0;transform:scaleX(0.7065);transform-origin:0 0;">14</div>
<div class="r" style="left:544.9px;top:85.2px;width:1.0px;height:1.0px;background:#8a8a8a;"></div>
<div class="r" style="left:549.2px;top:84.4px;width:0.9px;height:2.6px;background:#6a6a6a;"></div>
<div class="r" style="left:553.5px;top:85.2px;width:1.0px;height:1.0px;background:#8a8a8a;"></div>
<div class="t" style="left:556.10px;top:83.00px;font-size:5.600px;line-height:6.26px;color:#b0b0b0;transform:scaleX(0.7065);transform-origin:0 0;">15</div>
<div class="r" style="left:562.1px;top:85.2px;width:1.0px;height:1.0px;background:#8a8a8a;"></div>
<div class="r" style="left:566.4px;top:84.4px;width:0.9px;height:2.6px;background:#6a6a6a;"></div>
<div class="r" style="left:570.7px;top:85.2px;width:1.0px;height:1.0px;background:#8a8a8a;"></div>
<div class="t" style="left:573.32px;top:83.00px;font-size:5.600px;line-height:6.26px;color:#b0b0b0;transform:scaleX(0.7065);transform-origin:0 0;">16</div>
<div class="r" style="left:579.3px;top:85.2px;width:1.0px;height:1.0px;background:#808080;"></div>
<div class="r" style="left:583.6px;top:84.4px;width:0.9px;height:2.6px;background:#7e7e7e;"></div>
<div class="r" style="left:587.9px;top:85.2px;width:1.0px;height:1.0px;background:#808080;"></div>
<div class="t" style="left:590.54px;top:83.00px;font-size:5.600px;line-height:6.26px;color:#b0b0b0;transform:scaleX(0.7065);transform-origin:0 0;">17</div>
<div class="r" style="left:596.5px;top:85.2px;width:1.0px;height:1.0px;background:#808080;"></div>
<div class="r" style="left:600.8px;top:84.4px;width:0.9px;height:2.6px;background:#7e7e7e;"></div>
<div class="r" style="left:605.2px;top:85.2px;width:1.0px;height:1.0px;background:#808080;"></div>
<div class="t" style="left:607.76px;top:83.00px;font-size:5.600px;line-height:6.26px;color:#b0b0b0;transform:scaleX(0.7065);transform-origin:0 0;">18</div>
<div class="r" style="left:320.9px;top:89.8px;width:1.0px;height:1.4px;background:#6a6a6a;"></div>
<div class="r" style="left:342.4px;top:89.8px;width:1.0px;height:1.4px;background:#6a6a6a;"></div>
<div class="r" style="left:363.9px;top:89.8px;width:1.0px;height:1.4px;background:#6a6a6a;"></div>
<div class="r" style="left:385.3px;top:89.8px;width:1.0px;height:1.4px;background:#6a6a6a;"></div>
<div class="r" style="left:406.8px;top:89.8px;width:1.0px;height:1.4px;background:#6a6a6a;"></div>
<div class="r" style="left:428.2px;top:89.8px;width:1.0px;height:1.4px;background:#6a6a6a;"></div>
<div class="r" style="left:449.6px;top:89.8px;width:1.0px;height:1.4px;background:#6a6a6a;"></div>
<div class="r" style="left:471.1px;top:89.8px;width:1.0px;height:1.4px;background:#6a6a6a;"></div>
<div class="r" style="left:492.5px;top:89.8px;width:1.0px;height:1.4px;background:#6a6a6a;"></div>
<div class="r" style="left:514.0px;top:89.8px;width:1.0px;height:1.4px;background:#6a6a6a;"></div>
<div class="r" style="left:535.5px;top:89.8px;width:1.0px;height:1.4px;background:#6a6a6a;"></div>
<div class="r" style="left:556.9px;top:89.8px;width:1.0px;height:1.4px;background:#6a6a6a;"></div>
<svg class="r" style="left:298.10px;top:80.60px;" width="5" height="12" viewBox="0 0 50 120" fill="none" stroke="#d0d0d0" stroke-width="10"><path d="M4 6 H46 V14 L25 54 L4 22 Z" fill="#2c2c2c" stroke="#8e8e8e" stroke-width="7"/><path d="M25 58 L46 78 V110 H4 V78 Z" fill="#484848" stroke="#8e8e8e" stroke-width="7"/></svg>
<svg class="r" style="left:570.10px;top:85.60px;" width="5" height="4" viewBox="0 0 50 40" fill="none" stroke="#d0d0d0" stroke-width="10"><path d="M25 4 L46 36 H4 Z" fill="#3a3a3a" stroke="#9a9a9a" stroke-width="5"/></svg>
<div class="r" style="left:19.0px;top:82.3px;width:6.9px;height:7.3px;background:#1c1c1c;box-sizing:border-box;border:1px solid #343434;border-radius:0.5px;"></div>
<div class="r" style="left:21.1px;top:85.0px;width:1.2px;height:3.0px;background:#dcdcdc;"></div>
<div class="r" style="left:21.1px;top:86.9px;width:3.0px;height:1.1px;background:#dcdcdc;"></div>
<div class="r" style="left:19.0px;top:100.9px;width:7.0px;height:374.1px;background:#1e1e1e;box-sizing:border-box;border-left:1px solid #363636;border-right:1px solid #363636;"></div>
<div class="r" style="left:20.0px;top:100.9px;width:5.0px;height:43.9px;background:#5e5e5e;"></div>
<div class="r" style="left:22.0px;top:105.1px;width:1.0px;height:1.0px;background:#7a7a7a;"></div>
<div class="t" style="left:17.00px;top:107.66px;width:12px;height:4.4px;text-align:center;font-size:4.0px;line-height:4.4px;color:#8e8e8e;transform:rotate(-90deg);">2</div>
<div class="r" style="left:22.0px;top:113.7px;width:1.0px;height:1.0px;background:#7a7a7a;"></div>
<div class="r" style="left:21.3px;top:118.0px;width:2.4px;height:0.9px;background:#7a7a7a;"></div>
<div class="r" style="left:22.0px;top:122.3px;width:1.0px;height:1.0px;background:#7a7a7a;"></div>
<div class="t" style="left:17.00px;top:124.88px;width:12px;height:4.4px;text-align:center;font-size:4.0px;line-height:4.4px;color:#8e8e8e;transform:rotate(-90deg);">1</div>
<div class="r" style="left:22.0px;top:130.9px;width:1.0px;height:1.0px;background:#7a7a7a;"></div>
<div class="r" style="left:21.3px;top:135.2px;width:2.4px;height:0.9px;background:#7a7a7a;"></div>
<div class="r" style="left:22.0px;top:139.5px;width:1.0px;height:1.0px;background:#7a7a7a;"></div>
<div class="r" style="left:22.0px;top:148.1px;width:1.0px;height:1.0px;background:#6e6e6e;"></div>
<div class="r" style="left:21.3px;top:152.4px;width:2.4px;height:0.9px;background:#6a6a6a;"></div>
<div class="r" style="left:22.0px;top:156.7px;width:1.0px;height:1.0px;background:#6e6e6e;"></div>
<div class="t" style="left:17.00px;top:159.32px;width:12px;height:4.4px;text-align:center;font-size:4.0px;line-height:4.4px;color:#8e8e8e;transform:rotate(-90deg);">1</div>
<div class="r" style="left:22.0px;top:165.3px;width:1.0px;height:1.0px;background:#6e6e6e;"></div>
<div class="r" style="left:21.3px;top:169.6px;width:2.4px;height:0.9px;background:#6a6a6a;"></div>
<div class="r" style="left:22.0px;top:173.9px;width:1.0px;height:1.0px;background:#6e6e6e;"></div>
<div class="t" style="left:17.00px;top:176.54px;width:12px;height:4.4px;text-align:center;font-size:4.0px;line-height:4.4px;color:#8e8e8e;transform:rotate(-90deg);">2</div>
<div class="r" style="left:22.0px;top:182.5px;width:1.0px;height:1.0px;background:#6e6e6e;"></div>
<div class="r" style="left:21.3px;top:186.9px;width:2.4px;height:0.9px;background:#6a6a6a;"></div>
<div class="r" style="left:22.0px;top:191.2px;width:1.0px;height:1.0px;background:#6e6e6e;"></div>
<div class="t" style="left:17.00px;top:193.76px;width:12px;height:4.4px;text-align:center;font-size:4.0px;line-height:4.4px;color:#8e8e8e;transform:rotate(-90deg);">3</div>
<div class="r" style="left:22.0px;top:199.8px;width:1.0px;height:1.0px;background:#6e6e6e;"></div>
<div class="r" style="left:21.3px;top:204.1px;width:2.4px;height:0.9px;background:#6a6a6a;"></div>
<div class="r" style="left:22.0px;top:208.4px;width:1.0px;height:1.0px;background:#6e6e6e;"></div>
<div class="t" style="left:17.00px;top:210.98px;width:12px;height:4.4px;text-align:center;font-size:4.0px;line-height:4.4px;color:#8e8e8e;transform:rotate(-90deg);">4</div>
<div class="r" style="left:22.0px;top:217.0px;width:1.0px;height:1.0px;background:#6e6e6e;"></div>
<div class="r" style="left:21.3px;top:221.3px;width:2.4px;height:0.9px;background:#6a6a6a;"></div>
<div class="r" style="left:22.0px;top:225.6px;width:1.0px;height:1.0px;background:#6e6e6e;"></div>
<div class="t" style="left:17.00px;top:228.20px;width:12px;height:4.4px;text-align:center;font-size:4.0px;line-height:4.4px;color:#8e8e8e;transform:rotate(-90deg);">5</div>
<div class="r" style="left:22.0px;top:234.2px;width:1.0px;height:1.0px;background:#6e6e6e;"></div>
<div class="r" style="left:21.3px;top:238.5px;width:2.4px;height:0.9px;background:#6a6a6a;"></div>
<div class="r" style="left:22.0px;top:242.8px;width:1.0px;height:1.0px;background:#6e6e6e;"></div>
<div class="t" style="left:17.00px;top:245.42px;width:12px;height:4.4px;text-align:center;font-size:4.0px;line-height:4.4px;color:#8e8e8e;transform:rotate(-90deg);">6</div>
<div class="r" style="left:22.0px;top:251.4px;width:1.0px;height:1.0px;background:#6e6e6e;"></div>
<div class="r" style="left:21.3px;top:255.7px;width:2.4px;height:0.9px;background:#6a6a6a;"></div>
<div class="r" style="left:22.0px;top:260.0px;width:1.0px;height:1.0px;background:#6e6e6e;"></div>
<div class="t" style="left:17.00px;top:262.64px;width:12px;height:4.4px;text-align:center;font-size:4.0px;line-height:4.4px;color:#8e8e8e;transform:rotate(-90deg);">7</div>
<div class="r" style="left:22.0px;top:268.6px;width:1.0px;height:1.0px;background:#6e6e6e;"></div>
<div class="r" style="left:21.3px;top:272.9px;width:2.4px;height:0.9px;background:#6a6a6a;"></div>
<div class="r" style="left:22.0px;top:277.3px;width:1.0px;height:1.0px;background:#6e6e6e;"></div>
<div class="t" style="left:17.00px;top:279.86px;width:12px;height:4.4px;text-align:center;font-size:4.0px;line-height:4.4px;color:#8e8e8e;transform:rotate(-90deg);">8</div>
<div class="r" style="left:22.0px;top:285.9px;width:1.0px;height:1.0px;background:#6e6e6e;"></div>
<div class="r" style="left:21.3px;top:290.2px;width:2.4px;height:0.9px;background:#6a6a6a;"></div>
<div class="r" style="left:22.0px;top:294.5px;width:1.0px;height:1.0px;background:#6e6e6e;"></div>
<div class="t" style="left:17.00px;top:297.08px;width:12px;height:4.4px;text-align:center;font-size:4.0px;line-height:4.4px;color:#8e8e8e;transform:rotate(-90deg);">9</div>
<div class="r" style="left:22.0px;top:303.1px;width:1.0px;height:1.0px;background:#6e6e6e;"></div>
<div class="r" style="left:21.3px;top:307.4px;width:2.4px;height:0.9px;background:#6a6a6a;"></div>
<div class="r" style="left:22.0px;top:311.7px;width:1.0px;height:1.0px;background:#6e6e6e;"></div>
<div class="t" style="left:17.00px;top:314.30px;width:12px;height:4.4px;text-align:center;font-size:4.0px;line-height:4.4px;color:#8e8e8e;transform:rotate(-90deg);">10</div>
<div class="r" style="left:22.0px;top:320.3px;width:1.0px;height:1.0px;background:#6e6e6e;"></div>
<div class="r" style="left:21.3px;top:324.6px;width:2.4px;height:0.9px;background:#6a6a6a;"></div>
<div class="r" style="left:22.0px;top:328.9px;width:1.0px;height:1.0px;background:#6e6e6e;"></div>
<div class="t" style="left:17.00px;top:331.52px;width:12px;height:4.4px;text-align:center;font-size:4.0px;line-height:4.4px;color:#8e8e8e;transform:rotate(-90deg);">11</div>
<div class="r" style="left:22.0px;top:337.5px;width:1.0px;height:1.0px;background:#6e6e6e;"></div>
<div class="r" style="left:21.3px;top:341.8px;width:2.4px;height:0.9px;background:#6a6a6a;"></div>
<div class="r" style="left:22.0px;top:346.1px;width:1.0px;height:1.0px;background:#6e6e6e;"></div>
<div class="t" style="left:17.00px;top:348.74px;width:12px;height:4.4px;text-align:center;font-size:4.0px;line-height:4.4px;color:#8e8e8e;transform:rotate(-90deg);">12</div>
<div class="r" style="left:22.0px;top:354.7px;width:1.0px;height:1.0px;background:#6e6e6e;"></div>
<div class="r" style="left:21.3px;top:359.1px;width:2.4px;height:0.9px;background:#6a6a6a;"></div>
<div class="r" style="left:22.0px;top:363.4px;width:1.0px;height:1.0px;background:#6e6e6e;"></div>
<div class="t" style="left:17.00px;top:365.96px;width:12px;height:4.4px;text-align:center;font-size:4.0px;line-height:4.4px;color:#8e8e8e;transform:rotate(-90deg);">13</div>
<div class="r" style="left:22.0px;top:372.0px;width:1.0px;height:1.0px;background:#6e6e6e;"></div>
<div class="r" style="left:21.3px;top:376.3px;width:2.4px;height:0.9px;background:#6a6a6a;"></div>
<div class="r" style="left:22.0px;top:380.6px;width:1.0px;height:1.0px;background:#6e6e6e;"></div>
<div class="t" style="left:17.00px;top:383.18px;width:12px;height:4.4px;text-align:center;font-size:4.0px;line-height:4.4px;color:#8e8e8e;transform:rotate(-90deg);">14</div>
<div class="r" style="left:22.0px;top:389.2px;width:1.0px;height:1.0px;background:#6e6e6e;"></div>
<div class="r" style="left:21.3px;top:393.5px;width:2.4px;height:0.9px;background:#6a6a6a;"></div>
<div class="r" style="left:22.0px;top:397.8px;width:1.0px;height:1.0px;background:#6e6e6e;"></div>
<div class="t" style="left:17.00px;top:400.40px;width:12px;height:4.4px;text-align:center;font-size:4.0px;line-height:4.4px;color:#8e8e8e;transform:rotate(-90deg);">15</div>
<div class="r" style="left:22.0px;top:406.4px;width:1.0px;height:1.0px;background:#6e6e6e;"></div>
<div class="r" style="left:21.3px;top:410.7px;width:2.4px;height:0.9px;background:#6a6a6a;"></div>
<div class="r" style="left:22.0px;top:415.0px;width:1.0px;height:1.0px;background:#6e6e6e;"></div>
<div class="t" style="left:17.00px;top:417.62px;width:12px;height:4.4px;text-align:center;font-size:4.0px;line-height:4.4px;color:#8e8e8e;transform:rotate(-90deg);">16</div>
<div class="r" style="left:22.0px;top:423.6px;width:1.0px;height:1.0px;background:#6e6e6e;"></div>
<div class="r" style="left:21.3px;top:427.9px;width:2.4px;height:0.9px;background:#6a6a6a;"></div>
<div class="r" style="left:22.0px;top:432.2px;width:1.0px;height:1.0px;background:#6e6e6e;"></div>
<div class="t" style="left:17.00px;top:434.84px;width:12px;height:4.4px;text-align:center;font-size:4.0px;line-height:4.4px;color:#8e8e8e;transform:rotate(-90deg);">17</div>
<div class="r" style="left:22.0px;top:440.8px;width:1.0px;height:1.0px;background:#6e6e6e;"></div>
<div class="r" style="left:21.3px;top:445.1px;width:2.4px;height:0.9px;background:#6a6a6a;"></div>
<div class="r" style="left:22.0px;top:449.5px;width:1.0px;height:1.0px;background:#6e6e6e;"></div>
<div class="t" style="left:17.00px;top:452.06px;width:12px;height:4.4px;text-align:center;font-size:4.0px;line-height:4.4px;color:#8e8e8e;transform:rotate(-90deg);">18</div>
<div class="r" style="left:22.0px;top:458.1px;width:1.0px;height:1.0px;background:#6e6e6e;"></div>
<div class="r" style="left:21.3px;top:462.4px;width:2.4px;height:0.9px;background:#6a6a6a;"></div>
<div class="r" style="left:22.0px;top:466.7px;width:1.0px;height:1.0px;background:#6e6e6e;"></div>
<div class="t" style="left:17.00px;top:469.28px;width:12px;height:4.4px;text-align:center;font-size:4.0px;line-height:4.4px;color:#8e8e8e;transform:rotate(-90deg);">19</div>
<div class="r" style="left:847px;top:80.1px;width:7px;height:6.2px;background:#3c3c3c;border-radius:1.2px;"></div>
<svg class="r" style="left:848.50px;top:82.30px;" width="4" height="2" viewBox="0 0 40 20" fill="none" stroke="#d0d0d0" stroke-width="10"><path d="M4 17 L20 3 L36 17 Z" fill="#f2f2f2" stroke="none"/></svg>
<div class="r" style="left:847px;top:87.1px;width:7px;height:276.6px;background:#414141;box-sizing:border-box;border:0.6px solid #4a4a4a;border-radius:1.2px;"></div>
<div class="r" style="left:849.2px;top:221.9px;width:2.6px;height:6.4px;background:#a8a8a8;border-radius:0.6px;"></div>
<div class="r" style="left:847px;top:469.2px;width:7px;height:5.8px;background:#3c3c3c;border-radius:1.2px;"></div>
<svg class="r" style="left:848.50px;top:471.00px;" width="4" height="2" viewBox="0 0 40 20" fill="none" stroke="#d0d0d0" stroke-width="10"><path d="M4 3 L20 17 L36 3 Z" fill="#f2f2f2" stroke="none"/></svg>
<svg class="r" style="left:4.80px;top:88.30px;" width="8" height="8" viewBox="0 0 80 80" fill="none" stroke="#c4c4c4" stroke-width="10"><circle cx="34" cy="32" r="26" stroke-width="6.5"/><path d="M52 52 L72 72" stroke-width="6.5"/></svg>
<svg class="r" style="left:4.50px;top:104.10px;" width="9" height="9" viewBox="0 0 90 90" fill="none" stroke="#c4c4c4" stroke-width="10"><path d="M10 8 H80 V62 H28 L18 74 V62 H10 Z" stroke-width="6"/><path d="M24 26 H52 M24 38 H40" stroke-width="6"/></svg>
<div class="r" style="left:5.9px;top:120.0px;width:4.6px;height:0.8px;background:#a8a8a8;"></div>
<div class="r" style="left:7.1px;top:122.0px;width:4.6px;height:0.8px;background:#a8a8a8;"></div>
<div class="r" style="left:7.9px;top:124.0px;width:4.4px;height:0.8px;background:#a8a8a8;"></div>
<div class="r" style="left:5.9px;top:126.0px;width:4.6px;height:0.8px;background:#a8a8a8;"></div>
<svg class="r" style="left:4.50px;top:135.20px;" width="9" height="8" viewBox="0 0 90 80" fill="none" stroke="#c4c4c4" stroke-width="10"><path d="M6 26 H26 L80 4 V70 L26 50 H6 Z M26 26 V50 M30 52 L36 76 H46 L42 56" stroke-width="6"/></svg>
<svg class="r" style="left:859.30px;top:89.60px;" width="6" height="7" viewBox="0 0 60 70" fill="none" stroke="#c8c8c8" stroke-width="10"><path d="M24 4 H50 M30 4 V66 M44 4 V66" stroke-width="6"/><path d="M30 4 H22 Q8 4 8 18 Q8 32 22 32 H30 Z" fill="#c8c8c8" stroke="#c8c8c8" stroke-width="5"/></svg>
<svg class="r" style="left:858.70px;top:104.20px;" width="8" height="8" viewBox="0 0 80 80" fill="none" stroke="#747474" stroke-width="10"><rect x="6" y="6" width="68" height="62" stroke-width="5"/><path d="M6 24 H74 M6 40 H74 M6 54 H74 M28 24 V68 M52 24 V68" stroke-width="5"/></svg>
<svg class="r" style="left:858.60px;top:119.70px;" width="8" height="8" viewBox="0 0 80 80" fill="none" stroke="#747474" stroke-width="10"><rect x="8" y="6" width="64" height="64" stroke-width="6"/><path d="M12 64 L40 36 L52 48 M46 22 H60 V36" stroke-width="6"/></svg>
<svg class="r" style="left:858.50px;top:134.40px;" width="8" height="8" viewBox="0 0 80 80" fill="none" stroke="#747474" stroke-width="10"><rect x="10" y="6" width="58" height="70" stroke-width="6"/><rect x="10" y="30" width="58" height="20" fill="#747474" stroke="none"/></svg>
<svg class="r" style="left:858.40px;top:151.00px;" width="8" height="8" viewBox="0 0 80 80" fill="none" stroke="#747474" stroke-width="10"><circle cx="28" cy="30" r="20" stroke-width="6"/><rect x="30" y="30" width="40" height="42" stroke-width="6" fill="#222"/><rect x="42" y="42" width="16" height="18" fill="#747474" stroke="none"/></svg>
<svg class="r" style="left:858.60px;top:166.00px;" width="8" height="8" viewBox="0 0 80 80" fill="none" stroke="#747474" stroke-width="10"><path d="M8 72 H72 M14 62 H24 V50 H36 V36 H48 V20 H60 V62" stroke-width="6"/><rect x="14" y="52" width="50" height="14" fill="#747474" stroke="none"/></svg>
<svg class="r" style="left:858.50px;top:181.30px;" width="8" height="8" viewBox="0 0 80 80" fill="none" stroke="#747474" stroke-width="10"><path d="M14 76 L40 8 L66 76 M24 50 H56 M6 76 H74" stroke-width="6"/></svg>
<svg class="r" style="left:858.60px;top:196.60px;" width="8" height="8" viewBox="0 0 80 80" fill="none" stroke="#747474" stroke-width="10"><path d="M8 62 Q20 10 34 22 Q44 34 20 56 Q40 40 54 44 L72 62 M44 66 L60 50" stroke-width="6"/></svg>
<div class="t" style="left:4.60px;top:480.00px;font-size:6.000px;line-height:6.70px;color:#f4f4f4;transform:scaleX(0.8645);transform-origin:0 0;">Side 1 af 1</div>
<div class="r" style="left:32.4px;top:476.5px;width:0.6px;height:12px;background:#555;"></div>
<svg class="r" style="left:37.30px;top:478.70px;" width="7" height="7" viewBox="0 0 70 70" fill="none" stroke="#c8c8c8" stroke-width="10"><path d="M8 8 H60 M8 24 H60 M8 38 V64 M24 38 V64 M8 38 H30 M38 48 H60" stroke-width="6"/></svg>
<div class="t" style="left:48.30px;top:480.00px;font-size:6.000px;line-height:6.70px;color:#f4f4f4;transform:scaleX(0.9421);transform-origin:0 0;">Word count</div>
<div class="r" style="left:670.6px;top:476.5px;width:0.6px;height:12px;background:#555;"></div>
<div class="t" style="left:676.00px;top:480.00px;font-size:6.000px;line-height:6.70px;color:#f4f4f4;transform:scaleX(0.8664);transform-origin:0 0;">Dansk – Danmark</div>
<div class="r" style="left:722.0px;top:482.6px;width:1.8px;height:0.8px;background:#a8a8a8;"></div>
<svg class="r" style="left:728.10px;top:479.00px;" width="8" height="8" viewBox="0 0 80 80" fill="none" stroke="#d8d8d8" stroke-width="10"><circle cx="40" cy="40" r="32" stroke-width="6"/><path d="M40 8 Q22 40 40 72 M40 8 Q58 40 40 72 M10 30 H70 M10 50 H70" stroke-width="5"/></svg>
<div class="r" style="left:739.6px;top:477.1px;width:10.3px;height:10.8px;background:#5a5a5a;border-radius:1.5px;"></div>
<svg class="r" style="left:740.70px;top:478.50px;" width="8" height="8" viewBox="0 0 80 80" fill="none" stroke="#d8d8d8" stroke-width="10"><path d="M12 6 H64 V46 M12 6 V74 H40" stroke-width="7"/><path d="M28 52 L38 20 L48 52 M31 42 H45" stroke-width="6"/><path d="M46 66 L54 74 L72 56" stroke="#79a3de" stroke-width="6"/></svg>
<div class="r" style="left:754.2px;top:476.5px;width:0.6px;height:12px;background:#555;"></div>
<svg class="r" style="left:757.00px;top:478.90px;" width="9" height="8" viewBox="0 0 90 80" fill="none" stroke="#d0d0d0" stroke-width="10"><path d="M6 14 H30 M6 26 H24" stroke="#79a3de" stroke-width="6"/><path d="M10 52 L26 72 L62 22" stroke-width="6.5"/><circle cx="68" cy="16" r="9" stroke-width="6"/></svg>
<svg class="r" style="left:769.30px;top:481.50px;" width="2.6" height="1.8" viewBox="0 0 26.0 18.0" fill="none" stroke="#aaaaaa" stroke-width="10"><path d="M3 4 L13 14 L23 4" stroke-width="6"/></svg>
<div class="r" style="left:777.8px;top:476.5px;width:0.6px;height:12px;background:#555;"></div>
<svg class="r" style="left:782.50px;top:478.50px;" width="7" height="9" viewBox="0 0 70 90" fill="none" stroke="#cfcfcf" stroke-width="10"><rect x="6" y="6" width="58" height="78" rx="5" stroke-width="6.5"/><path d="M18 22 L26 16 M44 16 L52 22 M18 68 L26 74 M44 74 L52 68" stroke="#79a3de" stroke-width="5"/></svg>
<svg class="r" style="left:796.00px;top:478.40px;" width="8" height="9" viewBox="0 0 80 90" fill="none" stroke="#cfcfcf" stroke-width="10"><path d="M14 80 V6 H66 V80" stroke-width="6.5"/><path d="M6 74 H74 M14 66 L6 74 L14 82 M66 66 L74 74 L66 82" stroke="#79a3de" stroke-width="5"/></svg>
<div class="r" style="left:811.4px;top:482.3px;width:6.0px;height:0.6px;background:#cccccc;"></div>
<div class="t" style="left:823.80px;top:480.00px;font-size:6.000px;line-height:6.70px;color:#f4f4f4;transform:scaleX(0.8965);transform-origin:0 0;">Zoom 100%</div>
<div class="r" style="left:858.6px;top:482.3px;width:6.6px;height:0.6px;background:#d4d4d4;"></div>
<div class="r" style="left:861.6px;top:479.0px;width:0.6px;height:6.6px;background:#d4d4d4;"></div>
</body></html>
